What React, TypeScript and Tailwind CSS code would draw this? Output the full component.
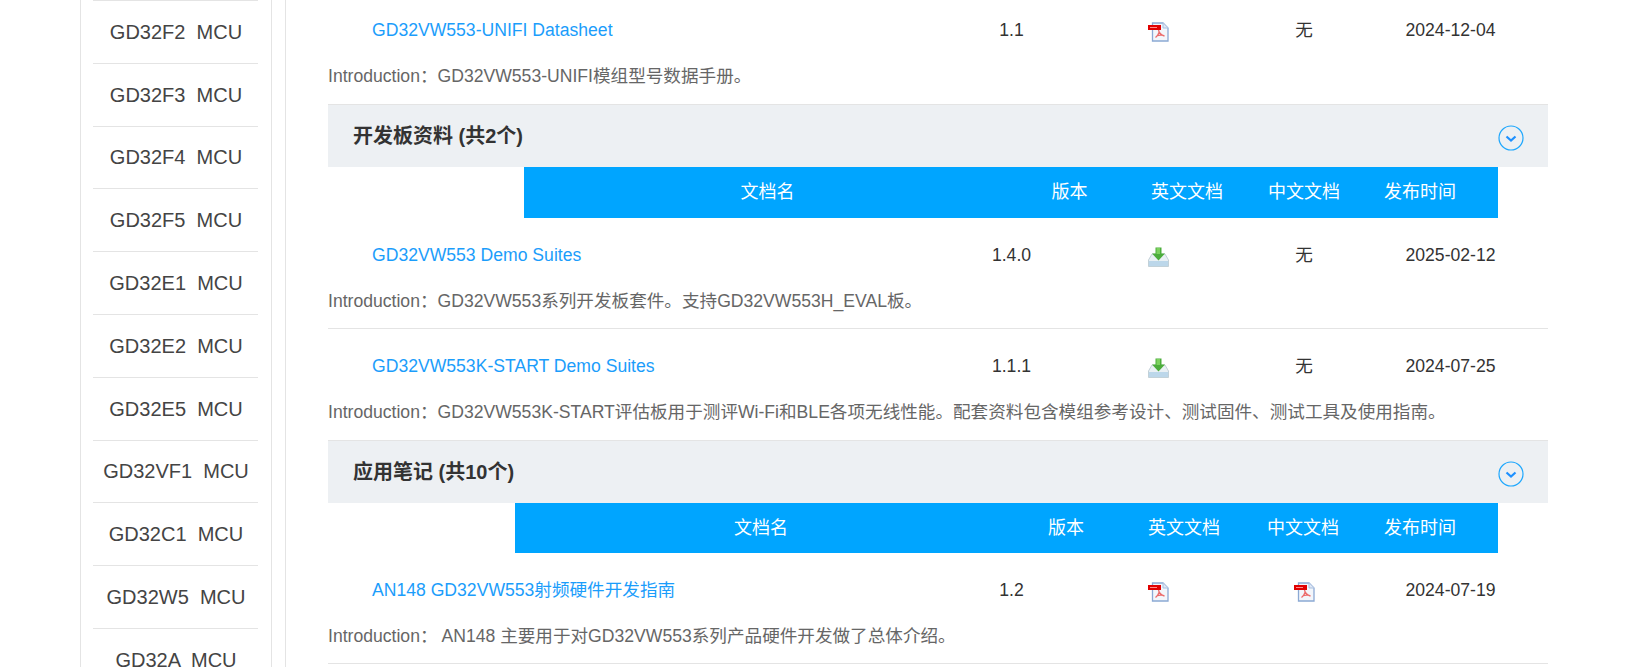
const sidebarItems = [
  'GD32F2',
  'GD32F3',
  'GD32F4',
  'GD32F5',
  'GD32E1',
  'GD32E2',
  'GD32E5',
  'GD32VF1',
  'GD32C1',
  'GD32W5',
  'GD32A',
];

type Doc = {
  name: string;
  version: string;
  en: 'pdf' | 'zip';
  cn: 'pdf' | 'none';
  date: string;
  intro: string;
};

const PdfIcon = () => (
  <svg width="21" height="20" viewBox="0 0 21 20" className="mt-[3px]">
    <path d="M4.500 1h10.500l5 5v13h-15.500z" fill="#f3f6fb" stroke="#8ba9d4" strokeWidth="1.300" />
    <path d="M15 1v5h5" fill="#dfe8f5" stroke="#a9c0e0" />
    <rect x="0" y="3" width="13" height="5" fill="#e00000" />
    <rect x="2" y="5" width="7" height="1" fill="#ff8a8a" />
    <path d="M10.500 8c.6 3 2 5 6 6M11 10.500c-.8 2.500-2 4-3.500 5M8.500 14c2-.8 4-1 7-.6" fill="none" stroke="#ec6a6a" strokeWidth="1.300" />
  </svg>
);

const DownloadIcon = () => (
  <svg width="21" height="20" viewBox="0 0 21 20" className="mt-[2px]">
    <path d="M4 7h13l3.500 6v6.500h-20v-6.500z" fill="#e9f0f4" stroke="#b5c6cf" strokeWidth="0.800" />
    <rect x="1" y="14" width="19" height="5" fill="#bcd7ea" />
    <path d="M7.500 0.500h6v6h3.500l-6.500 7-6.500-7h3.500z" fill="#4cad3c" />
    <path d="M8.500 1h3.500v6h-3.500z" fill="#7cd15e" />
  </svg>
);

const ChevronCircle = () => (
  <svg width="26" height="26" viewBox="0 0 26 26" fill="none" className="mt-[3px]">
    <circle cx="13" cy="13" r="12" stroke="#1ea7fd" strokeWidth="1.200" />
    <path d="M8.500 11.500 13 15.500l4.500-4" stroke="#1e90ff" strokeWidth="2.200" />
  </svg>
);

const DocRow = ({ doc, last }: { doc: Doc; last?: boolean }) => (
  <div className={last ? 'h-[111px] pt-[22px]' : 'h-[111px] border-b border-[#e4e4e4] pt-[22px]'}>
    <div className="grid h-[31px] grid-cols-[566px_147px_147px_144px_149px] items-center pl-[44px] text-[17.6px] text-[#333]">
      <a className="text-[#1b9dfb]">{doc.name}</a>
      <span className="text-center">{doc.version}</span>
      <span className="flex justify-center">{doc.en === 'pdf' ? <PdfIcon /> : <DownloadIcon />}</span>
      <span className="flex justify-center">{doc.cn === 'pdf' ? <PdfIcon /> : '无'}</span>
      <span className="text-center">{doc.date}</span>
    </div>
    <p className="mt-[15px] text-[17.6px] leading-[30px] text-[#666]">{doc.intro}</p>
  </div>
);

const Band = ({ title }: { title: string }) => (
  <div className="flex h-[63px] items-center justify-between border-t border-[#e4e4e4] bg-[#edf0f3] pl-[25px] pr-[24px]">
    <h3 className="text-[20px] font-bold text-[#333]">{title}</h3>
    <ChevronCircle />
  </div>
);

const TableHead = ({ wide }: { wide?: boolean }) => (
  <div
    className={
      wide
        ? 'ml-[196px] mr-[50px] grid h-[51px] grid-cols-[487px_117px_118px_116px_116px] items-center bg-[#00a5ff] text-center text-[18px] text-white'
        : 'ml-[187px] mr-[50px] grid h-[50px] grid-cols-[492px_118px_118px_120px_114px] items-center bg-[#00a5ff] text-center text-[18px] text-white'
    }
  >
    <span>文档名</span>
    <span>版本</span>
    <span>英文文档</span>
    <span>中文文档</span>
    <span>发布时间</span>
  </div>
);

const boards: Doc[] = [
  {
    name: 'GD32VW553 Demo Suites',
    version: '1.4.0',
    en: 'zip',
    cn: 'none',
    date: '2025-02-12',
    intro: 'Introduction：GD32VW553系列开发板套件。支持GD32VW553H_EVAL板。',
  },
  {
    name: 'GD32VW553K-START Demo Suites',
    version: '1.1.1',
    en: 'zip',
    cn: 'none',
    date: '2024-07-25',
    intro:
      'Introduction：GD32VW553K-START评估板用于测评Wi-Fi和BLE各项无线性能。配套资料包含模组参考设计、测试固件、测试工具及使用指南。',
  },
];

export default function App() {
  return (
    <div
      className="flex h-[667px] overflow-hidden bg-white"
      style={{ fontFamily: '"Liberation Sans", "Noto Sans CJK SC", sans-serif' }}
    >
      <aside className="ml-[80px] h-[700px] w-[192px] shrink-0 border-x border-[#e4e4e4] pl-[12px] pr-[13px]">
        {sidebarItems.map((item) => (
          <div
            key={item}
            className="flex h-[62.8px] items-center justify-center border-t border-[#e4e4e4] pl-px text-[20px] whitespace-pre text-[#444]"
          >
            {item}  MCU
          </div>
        ))}
      </aside>

      <main className="ml-[13px] h-[700px] w-[1263px] shrink-0 border-l border-[#e4e4e4] pl-[42px]">
        <div className="-mt-[7px] w-[1220px]">
          <DocRow
            last
            doc={{
              name: 'GD32VW553-UNIFI Datasheet',
              version: '1.1',
              en: 'pdf',
              cn: 'none',
              date: '2024-12-04',
              intro: 'Introduction：GD32VW553-UNIFI模组型号数据手册。',
            }}
          />
          <Band title="开发板资料 (共2个)" />
          <TableHead wide />
          <DocRow doc={boards[0]} />
          <DocRow last doc={boards[1]} />
          <Band title="应用笔记 (共10个)" />
          <TableHead />
          <DocRow
            doc={{
              name: 'AN148 GD32VW553射频硬件开发指南',
              version: '1.2',
              en: 'pdf',
              cn: 'pdf',
              date: '2024-07-19',
              intro: 'Introduction： AN148 主要用于对GD32VW553系列产品硬件开发做了总体介绍。',
            }}
          />
        </div>
      </main>
    </div>
  );
}
